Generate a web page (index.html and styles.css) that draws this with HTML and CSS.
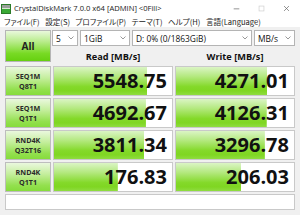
FILE: index.html
```html
<!DOCTYPE html>
<html lang="ja">
<head>
<meta charset="utf-8">
<title>CrystalDiskMark</title>
<link rel="stylesheet" href="styles.css">
</head>
<body>
<div class="win">
  <div class="titlebar">
    <svg class="appicon" width="10" height="10" viewBox="0 0 10 10">
      <rect x="0.5" y="0.5" width="9" height="9" fill="#3aa935" stroke="#2b7a28"/>
      <rect x="1" y="1" width="8" height="3" fill="#9aa09a"/>
      <rect x="1" y="4" width="8" height="1" fill="#d8e8d0"/>
    </svg>
    <span class="title">CrystalDiskMark 7.0.0 x64 [ADMIN] &lt;0Fill&gt;</span>
    <div class="controls">
      <svg class="ctl" width="10" height="10" viewBox="0 0 10 10"><path d="M1 5.5H9" stroke="#666" stroke-width="1"/></svg>
      <svg class="ctl" width="10" height="10" viewBox="0 0 10 10"><rect x="1.5" y="1.5" width="7" height="7" fill="none" stroke="#cfcfcf" stroke-width="1"/></svg>
      <svg class="ctl" width="10" height="10" viewBox="0 0 10 10"><path d="M1.5 1.5L8.5 8.5M8.5 1.5L1.5 8.5" stroke="#666" stroke-width="1"/></svg>
    </div>
  </div>
  <div class="menubar">
    <span class="mi">ファイル(F)</span>
    <span class="mi">設定(S)</span>
    <span class="mi">プロファイル(P)</span>
    <span class="mi">テーマ(T)</span>
    <span class="mi">ヘルプ(H)</span>
    <span class="mi">言語(Language)</span>
  </div>
  <div class="main">
    <div class="all">All</div>
    <div class="top">
      <div class="combos">
        <div class="combo c1"><span>5</span><svg width="6" height="4" viewBox="0 0 6 4"><path d="M0.5 0.5L3 3L5.5 0.5" fill="none" stroke="#999"/></svg></div>
        <div class="combo c2"><span>1GiB</span><svg width="6" height="4" viewBox="0 0 6 4"><path d="M0.5 0.5L3 3L5.5 0.5" fill="none" stroke="#999"/></svg></div>
        <div class="combo c3"><span>D: 0% (0/1863GiB)</span><svg width="6" height="4" viewBox="0 0 6 4"><path d="M0.5 0.5L3 3L5.5 0.5" fill="none" stroke="#999"/></svg></div>
        <div class="combo c4"><span>MB/s</span><svg width="6" height="4" viewBox="0 0 6 4"><path d="M0.5 0.5L3 3L5.5 0.5" fill="none" stroke="#999"/></svg></div>
      </div>
      <div class="heads">
        <div class="head">Read [MB/s]</div>
        <div class="head">Write [MB/s]</div>
      </div>
    </div>

    <div class="label"><span>SEQ1M</span><span>Q8T1</span></div>
    <div class="cell" style="background-size: 79.1% 100%">5548.75</div>
    <div class="cell" style="background-size: 77.2% 100%">4271.01</div>

    <div class="label"><span>SEQ1M</span><span>Q1T1</span></div>
    <div class="cell" style="background-size: 77.9% 100%">4692.67</div>
    <div class="cell" style="background-size: 76.9% 100%">4126.31</div>

    <div class="label"><span>RND4K</span><span>Q32T16</span></div>
    <div class="cell" style="background-size: 76.3% 100%">3811.34</div>
    <div class="cell" style="background-size: 75.3% 100%">3296.78</div>

    <div class="label"><span>RND4K</span><span>Q1T1</span></div>
    <div class="cell" style="background-size: 54.1% 100%">176.83</div>
    <div class="cell" style="background-size: 55.2% 100%">206.03</div>

    <div class="comment"></div>
  </div>
</div>
</body>
</html>
```
FILE: styles.css
```css
* { box-sizing: border-box; }
html, body { margin: 0; padding: 0; }
body {
  width: 300px;
  height: 215px;
  overflow: hidden;
  background: #f0f0f0;
  font-family: "Open Sans", "Noto Sans CJK JP", sans-serif;
  color: #1a1a1a;
}
.win { width: 300px; height: 215px; }

.titlebar {
  height: 16px;
  background: #fff;
  display: flex;
  align-items: center;
  padding-left: 1px;
}
.appicon { flex: none; margin-right: 3px; margin-top: 1px; }
.title {
  font-size: 7.6px;
  color: #222;
  white-space: nowrap;
}
.controls {
  margin-left: auto;
  display: flex;
  align-items: center;
  gap: 18px;
  padding-right: 10px;
}
.ctl { width: 7px; height: 7px; }

.menubar {
  height: 12px;
  background: #fff;
  display: flex;
  align-items: center;
  padding-left: 4px;
  font-family: "Noto Sans CJK JP", sans-serif;
  font-size: 7.6px;
  font-feature-settings: "palt";
  color: #222;
  border-bottom: 1px solid #f0f0f0;
}
.mi { margin-right: 5.5px; white-space: nowrap; }

.main {
  display: grid;
  grid-template-columns: 46px 120px 120px;
  grid-template-rows: 34px 30px 30px 30px 30px 16px;
  column-gap: 2px;
  row-gap: 2px;
  padding: 2px 5px 0 5px;
}

.all {
  height: 32px;
  border: 1px solid #b5b5b5;
  background: linear-gradient(to bottom, #e9f8dc 0%, #b9ec8c 35%, #78da24 75%, #66d010 100%);
  display: flex;
  align-items: center;
  justify-content: center;
  font-weight: 700;
  font-size: 10px;
  color: #222;
}

.top {
  grid-column: 2 / 4;
  display: flex;
  flex-direction: column;
}
.combos {
  display: flex;
  gap: 2px;
  height: 16px;
  margin-left: -1px;
}
.combo {
  height: 16px;
  border: 1px solid #b4b4b4;
  background: #fff;
  display: flex;
  align-items: center;
  justify-content: space-between;
  padding: 0 3px 0 3px;
  font-size: 8.4px;
  color: #111;
  white-space: nowrap;
}
.combo svg { flex: none; }
.c1 { width: 26px; }
.c2 { width: 50px; }
.c3 { width: 120px; }
.c4 { width: 41px; }

.heads {
  flex: 1;
  display: flex;
  gap: 2px;
}
.head {
  width: 120px;
  display: flex;
  align-items: center;
  justify-content: center;
  font-weight: 700;
  font-size: 9.2px;
  color: #111;
  padding-top: 2px;
}

.label {
  border: 1px solid #bdbdbd;
  background: linear-gradient(to bottom, #eaf8de 0%, #c4ee9c 40%, #93e04e 80%, #86dc3c 100%);
  display: flex;
  flex-direction: column;
  align-items: center;
  justify-content: center;
  font-weight: 700;
  font-size: 7.2px;
  line-height: 10.5px;
  color: #2a2a2a;
}

.cell {
  border: 1px solid #c9c9c9;
  background-color: #fff;
  background-image: linear-gradient(to bottom, #dbf5c5 0%, #b2e87c 35%, #84d92a 70%, #7fd622 85%, #8fdc40 100%);
  background-repeat: no-repeat;
  background-position: left top;
  display: flex;
  align-items: center;
  justify-content: flex-end;
  padding-right: 5px;
  font-weight: 700;
  font-size: 20px;
  color: #111;
  line-height: 1;
}

.comment {
  grid-column: 1 / 4;
  border: 1px solid #c9c9c9;
  background: #fff;
}
```
